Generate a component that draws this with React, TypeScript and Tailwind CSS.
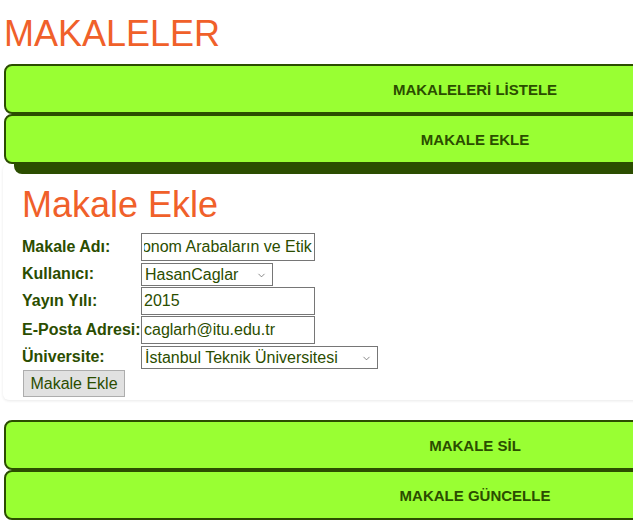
import React, { useEffect, useRef } from 'react';
import { ChevronDown } from 'lucide-react';

const navBtn =
  'block w-[942px] h-[50px] border-2 border-[#2b4d00] rounded-lg bg-[#99ff33] text-[#2b4d00] text-[15px] font-bold text-center pt-[3px]';

function NavButton({ label, shadow }: { label: string; shadow?: boolean }) {
  return (
    <button
      type="button"
      className={navBtn + (shadow ? ' shadow-[10px_10px_0_#2b4d00] relative z-10' : '')}
    >
      {label}
    </button>
  );
}

function Row({ label, children }: { label: string; children: React.ReactNode }) {
  return (
    <div className="flex items-center">
      <label className="w-[119px] shrink-0 font-bold text-[16px] text-[#2b4d00] whitespace-nowrap">
        {label}
      </label>
      {children}
    </div>
  );
}

function Select({ width, value }: { width: string; value: string }) {
  return (
    <div className={'relative ' + width}>
      <select className="block w-full h-[23px] appearance-none border border-[#767676] bg-white pl-[3px] text-[16px] leading-[21px] text-[#2b4d00]">
        <option>{value}</option>
      </select>
      <ChevronDown
        size={11}
        strokeWidth={1.5}
        className="pointer-events-none absolute right-[6px] top-[7px] text-[#555]"
      />
    </div>
  );
}

export default function App() {
  const titleRef = useRef<HTMLInputElement>(null);

  useEffect(() => {
    // the title is longer than the box, browser shows its end
    if (titleRef.current) titleRef.current.scrollLeft = titleRef.current.scrollWidth;
  }, []);

  const inputCls =
    'w-[174px] h-[28px] border border-[#767676] px-[2px] text-[16px] text-[#2b4d00] bg-white outline-none';

  return (
    <div className="w-full min-h-screen overflow-hidden bg-white font-['Liberation_Sans',Arial,sans-serif]">
      <div className="pl-[4px] pb-4">
        <h1 className="mt-[13px] text-[36px] leading-[41px] text-[#f0602a]">MAKALELER</h1>

        <div className="mt-[10px]">
          <NavButton label="MAKALELERİ LİSTELE" />
          <NavButton label="MAKALE EKLE" shadow />
        </div>

        <div className="-ml-px w-[942px] rounded-md bg-white pl-[19px] pb-[3px] pt-[20px] shadow-[0_1px_3px_rgba(0,0,0,0.09)]">
          <h2 className="text-[36px] leading-[41px] text-[#f0602a]">Makale Ekle</h2>

          <form className="mt-[8px] flex flex-col gap-px" onSubmit={(e) => e.preventDefault()}>
            <Row label="Makale Adı:">
              <input
                ref={titleRef}
                className={inputCls}
                defaultValue="Otonom Arabaların ve Etik"
              />
            </Row>
            <Row label="Kullanıcı:">
              <Select width="w-[132px]" value="HasanCaglar" />
            </Row>
            <Row label="Yayın Yılı:">
              <input className={inputCls} defaultValue="2015" />
            </Row>
            <Row label="E-Posta Adresi:">
              <input className={inputCls} defaultValue="caglarh@itu.edu.tr" />
            </Row>
            <Row label="Üniversite:">
              <Select width="w-[237px]" value="İstanbul Teknik Üniversitesi" />
            </Row>
            <div>
              <button
                type="submit"
                className="ml-px h-[27px] w-[102px] border border-[#adadad] bg-[#e1e1e1] text-[16px] text-[#2b4d00]"
              >
                Makale Ekle
              </button>
            </div>
          </form>
        </div>

        <div className="mt-[20px]">
          <NavButton label="MAKALE SİL" />
          <NavButton label="MAKALE GÜNCELLE" />
        </div>
      </div>
    </div>
  );
}
